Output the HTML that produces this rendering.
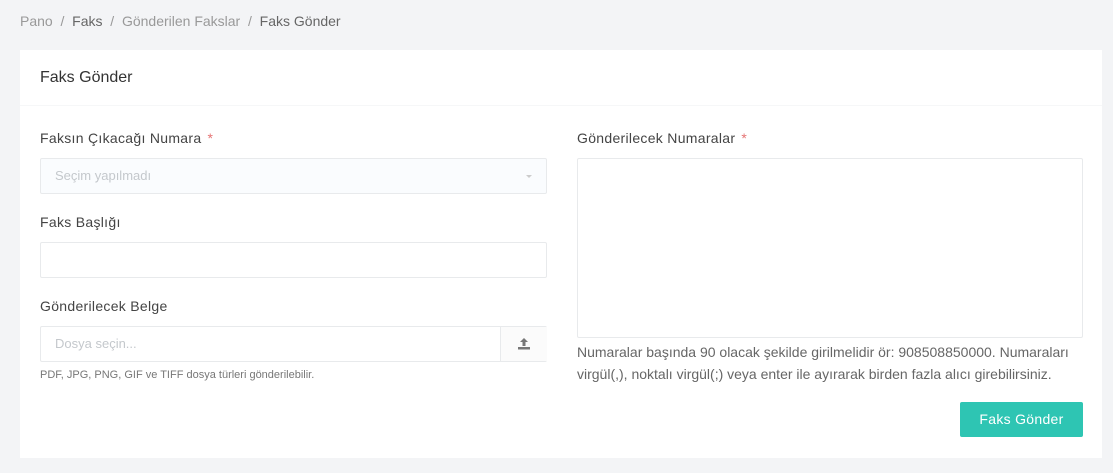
<!DOCTYPE html>
<html><head><meta charset="utf-8"><style>
*{box-sizing:border-box;margin:0;padding:0}
body{width:1113px;height:473px;background:#f3f4f6;font-family:"Liberation Sans",sans-serif;position:relative;overflow:hidden;color:#495057}
.a{position:absolute}
.bc{left:20px;top:13px;font-size:14px;color:#999;white-space:nowrap}
.bc b{font-weight:normal;color:#666}
.card{left:20px;top:50px;width:1082px;height:408px;background:#fff}
.hd{left:0;top:0;width:100%;height:56px;border-bottom:1px solid #f6f7f8}
.t{left:20px;top:19px;font-size:16px;color:#333}
.lbl{font-size:14px;color:#444;letter-spacing:.3px}
.lbl span{color:#e57373;margin-left:6px}
.in{border:1px solid #e8eaec;border-radius:2px;height:36px;background:#fff}
</style></head><body>
<div class="a bc">Pano &nbsp;/&nbsp; <b>Faks</b> &nbsp;/&nbsp; Gönderilen Fakslar &nbsp;/&nbsp; <b>Faks Gönder</b></div>
<div class="a card">
<div class="a hd"><div class="a t">Faks Gönder</div></div>
<div class="a lbl" style="left:20px;top:80px">Faksın Çıkacağı Numara<span>*</span></div>
<div class="a in" style="left:20px;top:108px;width:507px;background:#fafcfe"><div class="a" style="left:14px;top:9px;font-size:13px;color:#c4c8cc">Seçim yapılmadı</div><div class="a" style="right:14px;top:16px;border:3px solid transparent;border-top:3px solid #ccc"></div></div>
<div class="a lbl" style="left:20px;top:164px">Faks Başlığı</div>
<div class="a in" style="left:20px;top:192px;width:507px"></div>
<div class="a lbl" style="left:20px;top:248px">Gönderilecek Belge</div>
<div class="a in" style="left:20px;top:276px;width:507px"><div class="a" style="left:14px;top:9px;font-size:13px;color:#c4c8cc">Dosya seçin...</div><div class="a" style="left:459px;top:0;width:47px;height:34px;border-left:1px solid #e8eaec;background:#fbfbfb"><svg class="a" style="left:16px;top:10px" width="14" height="13" viewBox="0 0 14 13"><path d="M7 1L3 5h2.5v4h3V5H11z" fill="#777"/><rect x="1" y="10" width="12" height="2.5" fill="#777"/></svg></div></div>
<div class="a" style="left:20px;top:319px;font-size:11px;color:#777">PDF, JPG, PNG, GIF ve TIFF dosya türleri gönderilebilir.</div>
<div class="a lbl" style="left:557px;top:80px">Gönderilecek Numaralar<span>*</span></div>
<div class="a in" style="left:557px;top:108px;width:506px;height:180px"></div>
<div class="a" style="left:557px;top:291px;font-size:14px;line-height:22px;color:#666;width:520px">Numaralar başında 90 olacak şekilde girilmelidir ör: 908508850000. Numaraları virgül(,), noktalı virgül(;) veya enter ile ayırarak birden fazla alıcı girebilirsiniz.</div>
<div class="a" style="left:940px;top:352px;width:123px;height:35px;background:#2ec5b3;border-radius:2px;color:#fff;font-size:14px;text-align:center;line-height:35px;letter-spacing:.3px">Faks Gönder</div>
</div>
</body></html>
